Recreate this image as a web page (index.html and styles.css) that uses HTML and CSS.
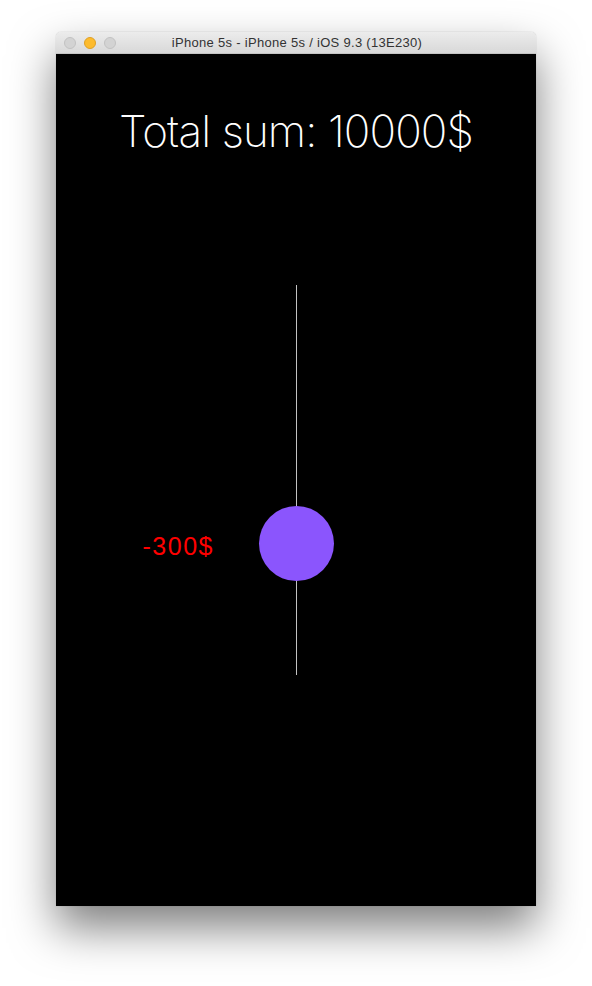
FILE: index.html
```html
<!DOCTYPE html>
<html>
  <head>
    <title>iPhone 5s - iPhone 5s / iOS 9.3 (13E230)</title>
    <link rel="stylesheet" href="styles.css">
  </head>

  <body>
    <div class="window">
      <div class="titlebar">
        <div class="lights">
          <span class="light"></span>
          <span class="light light-min"></span>
          <span class="light"></span>
        </div>
        <div class="title">iPhone 5s - iPhone 5s / iOS 9.3 (13E230)</div>
      </div>

      <div class="screen">
        <h1 class="total">Total sum: 10000$</h1>

        <div class="slider">
          <div class="track"></div>
          <div class="knob">
            <span class="amount">-300$</span>
          </div>
        </div>
      </div>
    </div>
  </body>
</html>
```

FILE: styles.css
```css
html,
body {
  margin: 0;
  background-color: #ffffff;
}

body {
  padding: 32px 0 80px 56px;
  font-family: "Liberation Sans", Arial, sans-serif;
}

.window {
  width: 480px;
  border-radius: 5px 5px 0 0;
  box-shadow: 0 22px 45px rgba(0, 0, 0, 0.5), 0 0 1px rgba(0, 0, 0, 0.35);
}

.titlebar {
  position: relative;
  height: 22px;
  border-radius: 5px 5px 0 0;
  background: linear-gradient(#ececec, #d8d8d8);
  border-bottom: 1px solid #c4c4c4;
  box-sizing: border-box;
  display: flex;
  align-items: center;
  justify-content: center;
}

.lights {
  position: absolute;
  left: 8px;
  top: 5px;
  display: flex;
  gap: 8px;
}

.light {
  width: 12px;
  height: 12px;
  border-radius: 50%;
  box-sizing: border-box;
  background-color: #d3d3d3;
  border: 1px solid #c2c2c2;
}

.light-min {
  background-color: #fdbb2d;
  border-color: #dfa024;
}

.title {
  font-size: 13px;
  letter-spacing: 0.3px;
  color: #333333;
  padding-left: 2px;
}

.screen {
  height: 852px;
  background-color: #000000;
  display: flex;
  flex-direction: column;
  align-items: center;
}

.total {
  margin: 49px 0 0 0;
  font-family: Inter, "Liberation Sans", sans-serif;
  font-weight: 200;
  font-size: 44px;
  letter-spacing: -0.9px;
  line-height: 56px;
  color: #ffffff;
}

.slider {
  position: relative;
  margin-top: 126px;
  width: 2px;
  height: 390px;
}

.track {
  width: 1px;
  height: 100%;
  margin-left: 1px;
  background-color: #c2c2c2;
}

.knob {
  position: absolute;
  left: -36px;
  top: 221px;
  width: 75px;
  height: 75px;
  border-radius: 50%;
  background-color: #8b55fd;
}

.amount {
  position: absolute;
  right: 120px;
  top: 25px;
  font-size: 25px;
  line-height: 30px;
  color: #ff0000;
  letter-spacing: 1.5px;
}
```
